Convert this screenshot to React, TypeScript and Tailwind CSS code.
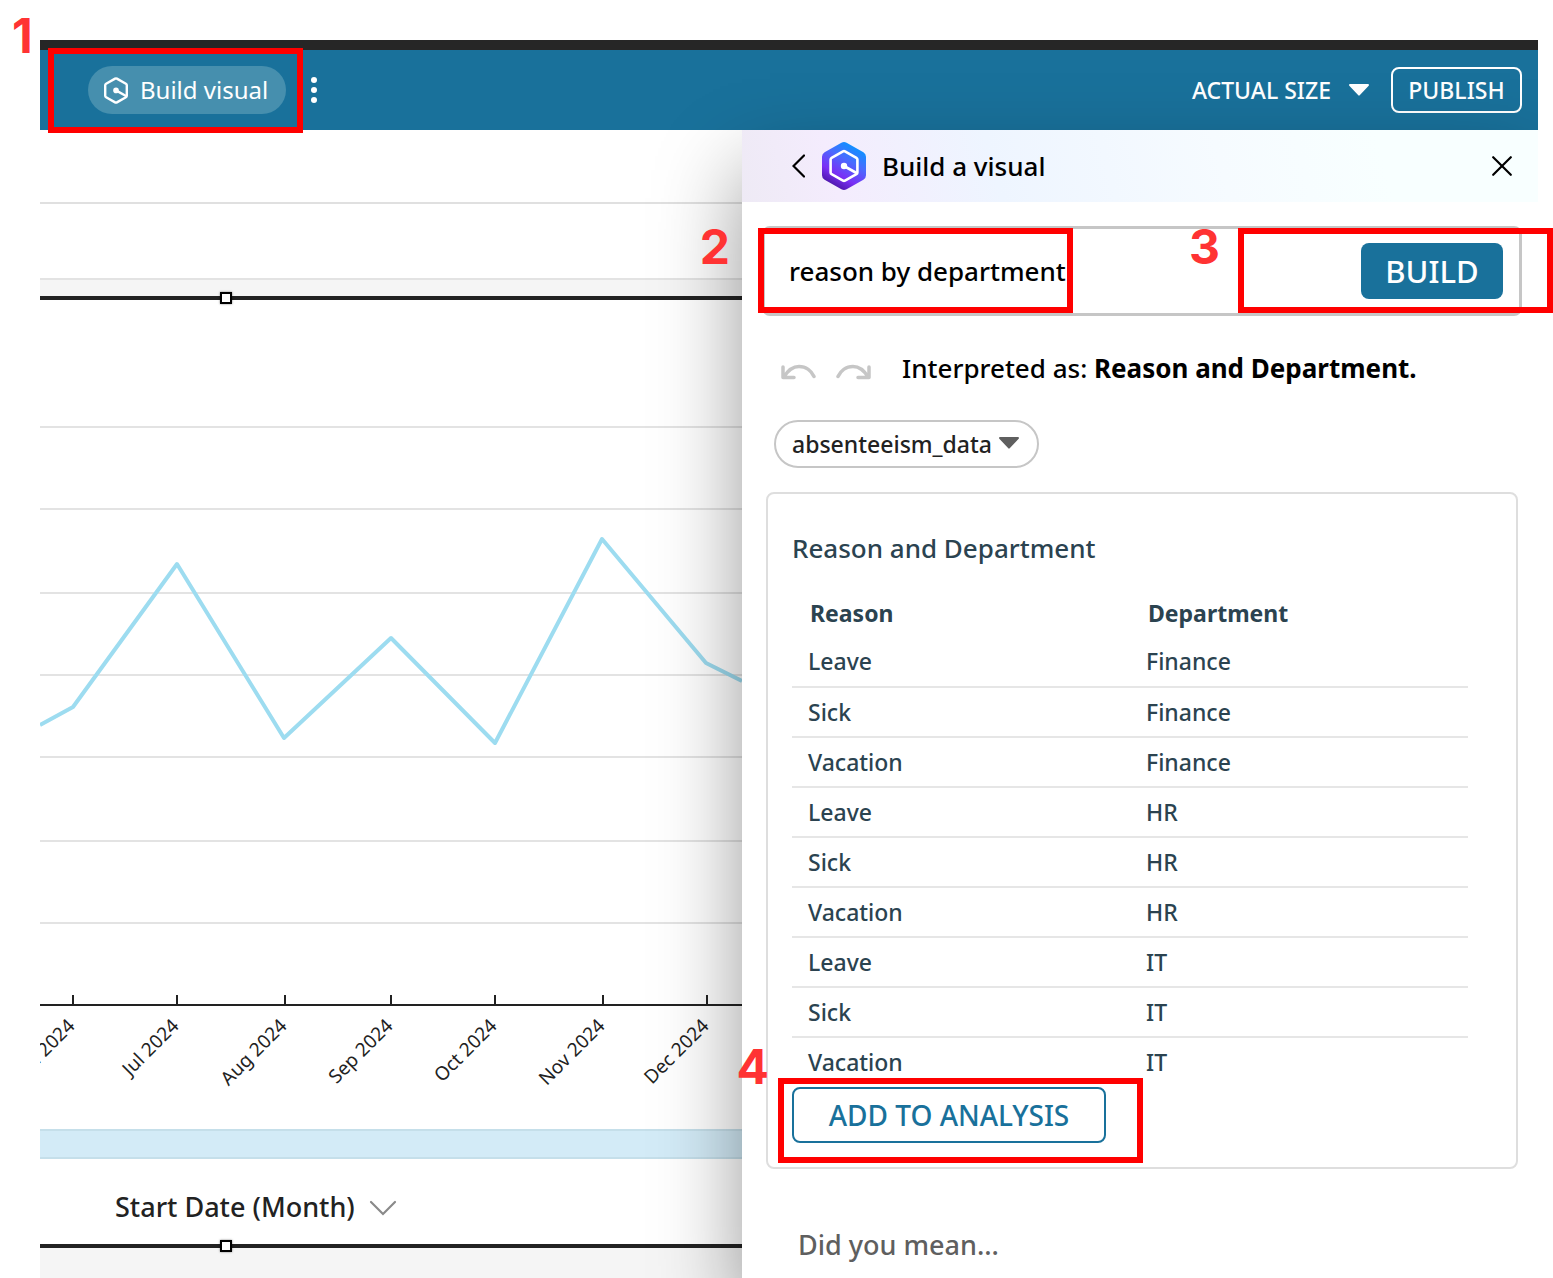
import React from "react";

const rows: [string, string][] = [
  ["Leave", "Finance"],
  ["Sick", "Finance"],
  ["Vacation", "Finance"],
  ["Leave", "HR"],
  ["Sick", "HR"],
  ["Vacation", "HR"],
  ["Leave", "IT"],
  ["Sick", "IT"],
  ["Vacation", "IT"],
];

const gridLines = [127, 209, 293, 375, 457, 541, 623];

const months = [
  { x: 33, label: "Jun 2024" },
  { x: 137, label: "Jul 2024" },
  { x: 245, label: "Aug 2024" },
  { x: 351, label: "Sep 2024" },
  { x: 455, label: "Oct 2024" },
  { x: 563, label: "Nov 2024" },
  { x: 667, label: "Dec 2024" },
];

function HexGlyph() {
  return (
    <svg viewBox="0 0 24 27" className="h-[27px] w-6" fill="none" stroke="currentColor" strokeWidth="2.4" strokeLinejoin="round" strokeLinecap="round" aria-hidden="true">
      <path d="M12.900 1.600a1.800 1.800 0 0 0-1.800 0L2.100 6.700a1.800 1.800 0 0 0-.9 1.500v10.600a1.800 1.800 0 0 0 .9 1.500l9 5.100a1.800 1.800 0 0 0 1.800 0l9-5.100a1.800 1.800 0 0 0 .9-1.500V8.200a1.800 1.800 0 0 0-.9-1.500z" />
      <path d="M22 19 12 13.400" />
      <circle cx="12" cy="13.400" r="2.800" fill="currentColor" stroke="none" />
    </svg>
  );
}

function LogoBadge() {
  return (
    <svg viewBox="0 0 44 48" className="h-12 w-11 shrink-0" aria-hidden="true">
      <defs>
        <linearGradient id="badge" x1="0.8" y1="0.08" x2="0.3" y2="1">
          <stop offset="0" stopColor="#0a95ff" />
          <stop offset="0.35" stopColor="#4a6bff" />
          <stop offset="0.7" stopColor="#7a2ff5" />
          <stop offset="1" stopColor="#45139c" />
        </linearGradient>
      </defs>
      <path d="M19.400.8a5.200 5.200 0 0 1 5.200 0l16.800 9.400A5.200 5.200 0 0 1 44 14.700v18.600a5.200 5.200 0 0 1-2.600 4.500L24.600 47.200a5.200 5.200 0 0 1-5.200 0L2.600 37.800A5.200 5.200 0 0 1 0 33.300V14.700a5.200 5.200 0 0 1 2.600-4.500z" fill="url(#badge)" />
      <g fill="none" stroke="#fff" strokeWidth="2.600" strokeLinejoin="round" strokeLinecap="round">
        <path d="M23 9.400a2 2 0 0 0-2 0L9.600 15.800a2 2 0 0 0-1 1.700v13a2 2 0 0 0 1 1.700L21 38.600a2 2 0 0 0 2 0l11.400-6.400a2 2 0 0 0 1-1.700v-13a2 2 0 0 0-1-1.700z" />
        <path d="M34.500 31 22 24" />
        <circle cx="22" cy="24" r="3.200" fill="#fff" stroke="none" />
      </g>
    </svg>
  );
}

function Handle() {
  return <span className="absolute -top-1 left-[180px] size-3 border-2 border-black bg-white shadow-[0_0_2px_rgba(0,0,0,0.5)]" />;
}

function Chart() {
  return (
    <svg className="block h-[829px] w-full" role="img" aria-label="Absences by month">
      {gridLines.map((y) => (
        <line key={y} x1="0" x2="100%" y1={y} y2={y} stroke="#e3e3e3" strokeWidth="2" />
      ))}
      <polyline points="0,425 33,407 137,264 244,438 351,338 455,443 562,239 666,363 702,381" fill="none" stroke="#9ddcf0" strokeWidth="4" strokeLinejoin="round" />
      <line x1="0" x2="100%" y1="705" y2="705" stroke="#222" strokeWidth="2" />
      {months.map(({ x, label }) => (
        <g key={label}>
          <line x1={x} x2={x} y1="695" y2="705" stroke="#222" strokeWidth="2" />
          <text x={x + 3} y={727} textAnchor="end" transform={`rotate(-45 ${x + 3} 727)`} fontSize="19" fill="#222">
            {label}
          </text>
        </g>
      ))}
    </svg>
  );
}

function AppBar() {
  return (
    <header className="flex h-20 items-center bg-[#19719b] pl-12 pr-4 text-white">
      <button className="flex h-12 items-center gap-3 rounded-full bg-[#468fae] pl-4 pr-[18px] text-2xl">
        <HexGlyph />
        Build visual
      </button>
      <button aria-label="More options" className="ml-[25px] flex flex-col gap-1">
        <span className="size-1.5 rounded-full bg-white" />
        <span className="size-1.5 rounded-full bg-white" />
        <span className="size-1.5 rounded-full bg-white" />
      </button>
      <button className="ml-auto flex items-center gap-[18px] text-[23px] font-medium">
        ACTUAL SIZE
        <svg viewBox="0 0 20 12" className="h-3 w-5" fill="currentColor" aria-hidden="true">
          <path d="M1 0h18a1 1 0 0 1 .7 1.700l-9 9.600a1 1 0 0 1-1.400 0L.3 1.700A1 1 0 0 1 1 0z" />
        </svg>
      </button>
      <button className="ml-[22px] h-[46px] w-[131px] rounded-lg border-2 border-white text-[23px] font-medium leading-10">PUBLISH</button>
    </header>
  );
}

function BuildPanel() {
  return (
    <aside className="relative w-[796px] shrink-0 bg-white shadow-[0_40px_80px_rgba(0,0,0,0.4)]">
      <div className="flex h-[72px] items-center bg-[linear-gradient(75deg,#eeeaf5_0%,#f4ecfd_12%,#eef5ff_32%,#f6fbff_60%,#f8ffff_80%)] pl-[50px] pr-[26px]">
        <button aria-label="Back">
          <svg viewBox="0 0 13 24" className="h-6 w-[13px]" fill="none" stroke="#000" strokeWidth="2.200" strokeLinecap="round" aria-hidden="true">
            <path d="M12 1.500 1.500 12 12 22.500" />
          </svg>
        </button>
        <div className="ml-[17px]">
          <LogoBadge />
        </div>
        <h1 className="ml-4 text-[26px] font-medium text-black">Build a visual</h1>
        <button aria-label="Close" className="ml-auto">
          <svg viewBox="0 0 20 20" className="size-5" fill="none" stroke="#000" strokeWidth="2.200" strokeLinecap="round" aria-hidden="true">
            <path d="m1.200 1.200 17.600 17.600M18.800 1.200 1.200 18.800" />
          </svg>
        </button>
      </div>

      <form className="ml-5 mr-4 mt-6 flex h-[90px] items-center rounded-lg border-[3px] border-[#c6c6c6] pl-6 pr-4" onSubmit={(e) => e.preventDefault()}>
        <input aria-label="Describe the visual" defaultValue="reason by department" className="min-w-0 flex-1 bg-transparent text-[26px] font-medium text-black outline-none" />
        <button type="submit" className="h-14 w-[142px] rounded-lg bg-[#19719b] text-[31px] font-medium text-white">
          BUILD
        </button>
      </form>

      <div className="mt-8 flex h-10 items-center pl-[38px]">
        <button aria-label="Undo" className="pt-2">
          <svg viewBox="0 0 36 16" className="h-4 w-9" fill="none" stroke="#c6c6c6" strokeWidth="3.500" strokeLinecap="round" strokeLinejoin="round" aria-hidden="true">
            <path d="M3 3v10.500h11M4 13C9 4.500 14 2.500 19 2.500c7 0 12.500 4.500 15 10" />
          </svg>
        </button>
        <button aria-label="Redo" className="ml-5 pt-2">
          <svg viewBox="0 0 36 16" className="h-4 w-9" fill="none" stroke="#c6c6c6" strokeWidth="3.500" strokeLinecap="round" strokeLinejoin="round" aria-hidden="true">
            <path d="M33 3v10.500H22M32 13C27 4.500 22 2.500 17 2.500c-7 0-12.500 4.500-15 10" />
          </svg>
        </button>
        <p className="ml-[30px] text-[26px] font-medium text-black">
          Interpreted as: <b>Reason and Department.</b>
        </p>
      </div>

      <div className="relative ml-8 mt-8 w-[265px]">
        <select aria-label="Dataset" className="h-12 w-full appearance-none rounded-full border-2 border-[#c6c6c6] bg-white pl-4 pr-10 text-[23px] font-medium text-[#222]">
          <option>absenteeism_data</option>
        </select>
        <svg viewBox="0 0 20 12" className="pointer-events-none absolute right-5 top-[17px] h-3 w-5" fill="#5f5f5f" aria-hidden="true">
          <path d="M1 0h18a1 1 0 0 1 .7 1.700l-9 9.600a1 1 0 0 1-1.400 0L.3 1.700A1 1 0 0 1 1 0z" />
        </svg>
      </div>

      <section className="ml-6 mr-5 mt-6 rounded-lg border-2 border-[#dedede] px-6 pb-6 pt-8 text-[#2b4350]">
        <h2 className="text-[26px] font-medium leading-[44px]">Reason and Department</h2>
        <table className="mt-[19px] w-[calc(100%-24px)] table-fixed border-collapse text-left text-[23px] font-medium">
          <thead>
            <tr className="h-[48px]">
              <th className="pl-[18px] font-bold">Reason</th>
              <th className="pl-[18px] font-bold">Department</th>
            </tr>
          </thead>
          <tbody>
            {rows.map(([reason, department], i) => (
              <tr key={i} className="h-[50px] border-b-2 border-[#e6e6e6] last:border-b-0">
                <td className="p-0 pl-4">{reason}</td>
                <td className="p-0 pl-4">{department}</td>
              </tr>
            ))}
          </tbody>
        </table>
        <button className="h-14 w-[314px] rounded-lg border-2 border-[#19719b] bg-white text-[28px] font-medium text-[#19719b]">ADD TO ANALYSIS</button>
      </section>

      <p className="ml-14 mt-14 text-[27px] font-medium leading-10 text-[#5f5f5f]">Did you mean...</p>
    </aside>
  );
}

function Callout({ className }: { className: string }) {
  return <div className={`pointer-events-none absolute border-[6px] border-[#f00] ${className}`} />;
}

function Marker({ n, className }: { n: number; className: string }) {
  return <span className={`absolute font-["Inter",sans-serif] text-5xl font-bold leading-none text-[#ff3333] ${className}`}>{n}</span>;
}

export default function App() {
  return (
    <div className='relative h-screen overflow-hidden bg-white pl-10 pr-[15px] pt-10 font-["Noto_Sans",sans-serif]'>
      <div className="flex h-full flex-col overflow-hidden">
        <div className="h-2.5 shrink-0 bg-[#262626]" />
        <AppBar />
        <div className="flex min-h-0 flex-1">
          <main className="min-w-0 flex-1 bg-[#f5f5f5]">
            <div className="h-[74px] border-b-2 border-[#e0e0e0] bg-white" />
            <div className="h-[76px] border-b-2 border-[#e3e3e3] bg-white" />
            <div className="mt-4 border-y-4 border-[#222] bg-white">
              <div className="relative -top-1">
                <Handle />
              </div>
              <Chart />
              <div className="h-[30px] border-y-2 border-[#c5dfea] bg-[#d3ebf7]" />
              <button className="flex h-[85px] items-center gap-[14px] pl-[75px] pt-3 text-[27px] font-medium text-[#222]">
                Start Date (Month)
                <svg viewBox="0 0 28 16" className="h-4 w-7" fill="none" stroke="#8a8a8a" strokeWidth="2.200" strokeLinecap="round" aria-hidden="true">
                  <path d="m2 2 12 12L26 2" />
                </svg>
              </button>
              <div className="relative">
                <Handle />
              </div>
            </div>
          </main>
          <BuildPanel />
        </div>
      </div>

      <Marker n={1} className="left-3 top-3" />
      <Callout className="left-12 top-12 h-[85px] w-[255px]" />
      <Marker n={2} className="right-[823px] top-[223px]" />
      <Callout className="right-[480px] top-[228px] h-[85px] w-[315px]" />
      <Marker n={3} className="right-[333px] top-[223px]" />
      <Callout className="right-0 top-[228px] h-[85px] w-[315px]" />
      <Marker n={4} className="right-[784px] top-[1043px]" />
      <Callout className="right-[410px] top-[1078px] h-[85px] w-[365px]" />
    </div>
  );
}
